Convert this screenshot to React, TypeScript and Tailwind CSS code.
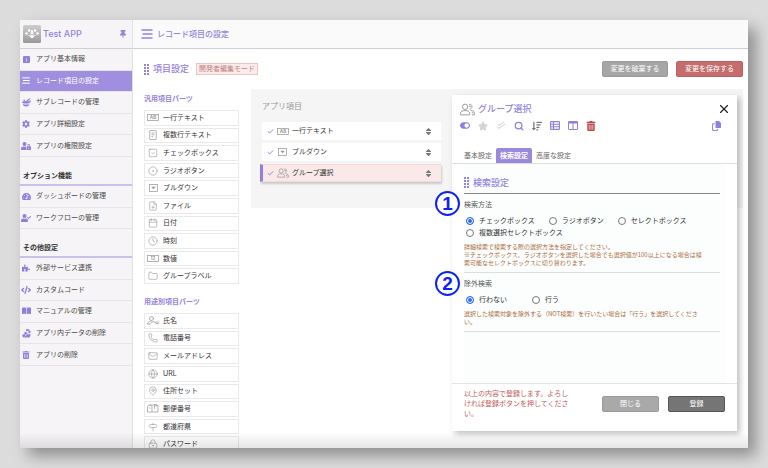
import type { ReactNode } from "react";
import {
  Calendar,
  Check,
  CircleDot,
  Clock,
  FilePlus,
  Folder,
  Globe,
  LockKeyhole,
  Mail,
  MapPin,
  Phone,
  Search,
  Signpost,
  SquareCheck,
  X,
} from "lucide-react";
import {
  FaCode,
  FaCog,
  FaPuzzlePiece,
  FaSort,
  FaSortAmountDown,
  FaStar,
  FaTachometerAlt,
  FaThumbtack,
  FaToggleOn,
  FaTrashAlt,
  FaUserCheck,
  FaUserLock,
} from "react-icons/fa";
import { BsInfoSquareFill } from "react-icons/bs";

type Entry = { icon: ReactNode; label: string; active?: boolean };

const partIcon = { size: 10, strokeWidth: 1.5 };

function BarsIcon({ className }: { className: string }) {
  return (
    <svg viewBox="0 0 24 20" className={className} stroke="currentColor" strokeWidth="3" strokeLinecap="round">
      <path d="M2 2H22M4 10H22M2 18H22" />
    </svg>
  );
}

function GripIcon() {
  return (
    <svg viewBox="0 0 6 11" width="6" height="11" className="mr-[3px]" fill="currentColor" shapeRendering="crispEdges">
      {[0, 3, 6, 9].map((y) => (
        <g key={y}>
          <rect x="0" y={y} width="2" height="2" />
          <rect x="3" y={y} width="2" height="2" />
        </g>
      ))}
    </svg>
  );
}

function DoubleCheckIcon() {
  return (
    <svg viewBox="0 0 20 18" width="10" height="9" fill="none" stroke="currentColor" strokeWidth="2">
      <path d="M2 5l4 4 10-7M2 11l4 4L18 6" />
    </svg>
  );
}

function BowlIcon() {
  return (
    <svg viewBox="0 0 20 20" width="9" height="9" fill="currentColor">
      <ellipse cx="9" cy="9.5" rx="9" ry="2.800" />
      <path d="M2 13.500c3 1.500 11 1.500 14 0 0 3-2 5.500-7 5.500s-7-2.500-7-5.500z" />
      <path d="M9 6l8-5.500 1.400 1.600-5 4.700z" />
      <circle cx="5" cy="5" r="1.800" />
      <circle cx="18" cy="7" r="1.800" />
    </svg>
  );
}

function BookIcon() {
  return (
    <svg viewBox="0 0 20 16" width="9" height="8" fill="currentColor">
      <path d="M0 1c3-1 6-1 9.3 0v14C6 14 3 14 0 15zM10.700 1C14 0 17 0 20 1v14c-3-1-6-1-9.300 0z" />
    </svg>
  );
}

function DataEraseIcon() {
  return (
    <svg viewBox="0 0 20 20" width="9" height="9" fill="currentColor">
      <path d="M9 1c4-2 8 0 8.500 4l2-1-1.500 6-5-3 2-1c-1-2.500-3-3-6-1z" />
      <path d="M6 6l5 1 1 4 4 1 2-2c2 4 0 9-3 9H5c-4 0-5-4-4-6l4-2z" />
      <path d="M6 11.500l4.500 4.500M10.500 11.500L6 16" stroke="#f6f4f6" strokeWidth="1.500" />
    </svg>
  );
}

function BoxedTextIcon({ text }: { text: string }) {
  return (
    <svg viewBox="0 0 24 14" width="12" height="7" fill="none" stroke="currentColor" strokeWidth="1.500">
      <rect x="1" y="1" width="22" height="12" />
      <text x="12" y="10.500" textAnchor="middle" fontSize="9" fontWeight="700" fill="currentColor" stroke="none">
        {text}
      </text>
    </svg>
  );
}

function DocumentIcon() {
  return (
    <svg viewBox="0 0 16 20" width="8" height="10" fill="none" stroke="currentColor" strokeWidth="1.500">
      <rect x="1.500" y="1" width="13" height="18" rx="1" />
      <path d="M5 6h6M5 9.500h6M5 13h3" />
    </svg>
  );
}

function PulldownIcon() {
  return (
    <svg viewBox="0 0 18 16" width="9" height="8" fill="none" stroke="currentColor" strokeWidth="1.500">
      <rect x="1" y="1" width="16" height="14" />
      <path d="M4.500 5.500h9l-4.500 5z" fill="currentColor" stroke="none" />
    </svg>
  );
}

function NameIcon() {
  return (
    <svg viewBox="0 0 24 18" width="12" height="9" fill="none" stroke="currentColor" strokeWidth="1.500" strokeLinecap="round">
      <circle cx="9" cy="5" r="4" />
      <path d="M1 16c1-5 5-6 8-6M1 16c4 1 8-1 10-4l2-2 2 3 2-1 1 3h5M19 12h4" />
    </svg>
  );
}

function PostIcon() {
  return (
    <svg viewBox="0 0 24 18" width="12" height="9" fill="none" stroke="currentColor" strokeWidth="1.500">
      <path d="M1 16V6c0-5 9-5 9 0v10zM10 16h12V3h-3M5 2h10M15 10V1h4v3h-4M4 8h3" />
    </svg>
  );
}

function GroupIcon({ className }: { className: string }) {
  return (
    <svg viewBox="0 0 28 24" className={className} fill="none" stroke="currentColor" strokeWidth="1.800">
      <circle cx="9.500" cy="7" r="5" />
      <path d="M1 22v-3c0-3 3-5 8.500-5s8.500 2 8.500 5v3zM17 2.500c6-2 8 8 1 9M20 14c5 0 7 2 7 5v3h-5" />
      <path d="M17 6h4M22 18h3" />
    </svg>
  );
}

function RowsIcon() {
  return (
    <svg viewBox="0 0 20 18" width="10" height="9" fill="none" stroke="currentColor" strokeWidth="2.200">
      <rect x="1.200" y="1.200" width="17.600" height="15.600" rx="1" />
      <path d="M1 6.500h18M1 11.500h18M7 1v16" />
    </svg>
  );
}

function ColumnsIcon() {
  return (
    <svg viewBox="0 0 20 18" width="10" height="9" fill="none" stroke="currentColor" strokeWidth="2">
      <rect x="1" y="1" width="18" height="16" rx="1" />
      <path d="M1 3h18" strokeWidth="4" />
      <path d="M10 1v16" />
    </svg>
  );
}

function CopyIcon() {
  return (
    <svg viewBox="0 0 18 20" width="9" height="10" fill="currentColor">
      <path d="M7 0h7l4 4v10H7z" />
      <path d="M5.500 5.500H1.200v13.300h10V16" fill="none" stroke="currentColor" strokeWidth="2" />
    </svg>
  );
}

const basics: Entry[] = [
  { icon: <BsInfoSquareFill size={7} />, label: "アプリ基本情報" },
  { icon: <BarsIcon className="h-[7px] w-2" />, label: "レコード項目の設定", active: true },
  { icon: <BowlIcon />, label: "サブレコードの管理" },
  { icon: <FaCog size={8} />, label: "アプリ詳細設定" },
  { icon: <FaUserLock size={10} />, label: "アプリの権限設定" },
];

const options: Entry[] = [
  { icon: <FaTachometerAlt size={9} />, label: "ダッシュボードの管理" },
  { icon: <FaUserCheck size={10} />, label: "ワークフローの管理" },
];

const others: Entry[] = [
  { icon: <FaPuzzlePiece size={8} />, label: "外部サービス連携" },
  { icon: <FaCode size={10} />, label: "カスタムコード" },
  { icon: <BookIcon />, label: "マニュアルの管理" },
  { icon: <DataEraseIcon />, label: "アプリ内データの削除" },
  { icon: <FaTrashAlt size={8} />, label: "アプリの削除" },
];

const generalParts: Entry[] = [
  { icon: <BoxedTextIcon text="AB" />, label: "一行テキスト" },
  { icon: <DocumentIcon />, label: "複数行テキスト" },
  { icon: <SquareCheck {...partIcon} />, label: "チェックボックス" },
  { icon: <CircleDot {...partIcon} />, label: "ラジオボタン" },
  { icon: <PulldownIcon />, label: "プルダウン" },
  { icon: <FilePlus {...partIcon} />, label: "ファイル" },
  { icon: <Calendar {...partIcon} />, label: "日付" },
  { icon: <Clock {...partIcon} />, label: "時刻" },
  { icon: <BoxedTextIcon text="12" />, label: "数値" },
  { icon: <Folder {...partIcon} />, label: "グループラベル" },
];

const purposeParts: Entry[] = [
  { icon: <NameIcon />, label: "氏名" },
  { icon: <Phone {...partIcon} />, label: "電話番号" },
  { icon: <Mail {...partIcon} />, label: "メールアドレス" },
  { icon: <Globe {...partIcon} />, label: "URL" },
  { icon: <MapPin {...partIcon} />, label: "住所セット" },
  { icon: <PostIcon />, label: "郵便番号" },
  { icon: <Signpost {...partIcon} />, label: "都道府県" },
  { icon: <LockKeyhole {...partIcon} />, label: "パスワード" },
];

const fields: Entry[] = [
  { icon: <BoxedTextIcon text="AB" />, label: "一行テキスト" },
  { icon: <PulldownIcon />, label: "プルダウン" },
  { icon: <GroupIcon className="h-[10px] w-3" />, label: "グループ選択", active: true },
];

function NavList({ items, height }: { items: Entry[]; height: string }) {
  return (
    <ul className={`flex flex-col ${height}`}>
      {items.map((item) => (
        <li key={item.label} className="flex flex-1 border-b border-[#e6e4e8]">
          <a
            href="#"
            className={`flex flex-1 items-center gap-1 ${item.active ? "bg-[#a08fdf] text-white" : "text-[#4a4a4a]"}`}
          >
            <span className={`flex w-3 justify-center ${item.active ? "text-white" : "text-[#927fdb]"}`}>
              {item.icon}
            </span>
            {item.label}
          </a>
        </li>
      ))}
    </ul>
  );
}

function NavHeading({ children }: { children: string }) {
  return (
    <h2 className="flex h-[29px] items-end border-b-2 border-[#c9c0ec] pb-[3px] pl-[3px] font-bold text-[#333]">
      {children}
    </h2>
  );
}

function PartList({ title, items, height }: { title: string; items: Entry[]; height: string }) {
  return (
    <section>
      <h2 className="mb-[6px] font-bold text-[#9583dc]">{title}</h2>
      <ul className={`flex flex-col gap-0.5 ${height}`}>
        {items.map((item) => (
          <li key={item.label} className="flex min-h-0 flex-1">
            <button type="button" className="flex flex-1 items-center gap-1 border border-[#e9e9e9] bg-white pl-[2px] text-[#333]">
              <span className="flex w-3 justify-center text-[#999]">{item.icon}</span>
              {item.label}
            </button>
          </li>
        ))}
      </ul>
    </section>
  );
}

function Radio({ name, label, checked }: { name: string; label: string; checked?: boolean }) {
  return (
    <label className="flex items-center gap-[5px] text-[#333]">
      <input
        type="radio"
        name={name}
        defaultChecked={checked}
        className="size-2 appearance-none rounded-full border border-[#777] bg-white checked:border-[#2f6df0] checked:bg-[#2f6df0] checked:shadow-[inset_0_0_0_1px_#fff]"
      />
      {label}
    </label>
  );
}

function Marker({ value, top }: { value: string; top: string }) {
  return (
    <span
      className={`absolute -left-[17px] flex size-[25px] items-center justify-center rounded-full border-2 border-[#0a22f5] bg-white font-['Liberation_Sans',sans-serif] text-[19px] font-bold text-[#0a22f5] ${top}`}
    >
      {value}
    </span>
  );
}

function HelpText({ children }: { children: ReactNode }) {
  return (
    <p className="mt-[5px] pr-[18px] font-['Noto_Sans_CJK_JP',sans-serif] text-[6px] leading-[8px] text-[#ad6a42]">
      {children}
    </p>
  );
}

function SettingsPanel() {
  return (
    <aside className="absolute top-[75px] right-[11px] bottom-[17px] flex w-[285px] flex-col bg-white shadow-[3px_3px_6px_rgba(0,0,0,0.25)]">
      <Marker value="1" top="top-[96px]" />
      <Marker value="2" top="top-[176px]" />
      <header className="flex h-7 items-center gap-[3px] pr-[6px] pl-2">
        <GroupIcon className="h-[13px] w-[15px] text-[#999]" />
        <h2 className="text-[9px] font-medium text-[#9583dc]">グループ選択</h2>
        <button type="button" aria-label="パネルを閉じる" className="ml-auto text-[#222]">
          <X size={14} strokeWidth={2} />
        </button>
      </header>
      <div className="flex h-[5px] items-center pr-4 pl-2 text-[#927fdb]">
        <div className="flex items-center gap-2">
          <button type="button" aria-label="有効" className="flex w-[10px] justify-center"><FaToggleOn size={11} /></button>
          <button type="button" aria-label="お気に入り" className="flex w-[10px] justify-center text-[#d3d3d3]"><FaStar size={10} /></button>
          <button type="button" aria-label="必須" className="flex w-[10px] justify-center text-[#cfcfcf]"><DoubleCheckIcon /></button>
          <button type="button" aria-label="検索" className="flex w-[10px] justify-center"><Search size={10} strokeWidth={3} /></button>
          <button type="button" aria-label="並び替え" className="flex w-[10px] justify-center text-[#777]"><FaSortAmountDown size={10} /></button>
          <button type="button" aria-label="一覧" className="flex w-[10px] justify-center"><RowsIcon /></button>
          <button type="button" aria-label="列" className="flex w-[10px] justify-center"><ColumnsIcon /></button>
          <button type="button" aria-label="削除" className="flex w-[10px] justify-center text-[#b94a4a]"><FaTrashAlt size={10} /></button>
        </div>
        <button type="button" aria-label="複製" className="ml-auto"><CopyIcon /></button>
      </div>
      <div role="tablist" className="mt-5 flex h-4 border-b border-[#ddd] pl-2">
        <button type="button" role="tab" aria-selected="false" className="px-1 text-[#666]">基本設定</button>
        <button type="button" role="tab" aria-selected="true" className="rounded-t-xs bg-[#9a88dd] px-1 font-bold text-white">検索設定</button>
        <button type="button" role="tab" aria-selected="false" className="px-1 text-[#666]">高度な設定</button>
      </div>
      <div className="mx-3 flex-1 overflow-hidden bg-[#fbfefd] pr-[5px] text-[#555]">
        <h3 className="flex h-[30px] items-center border-b border-[#888] pt-2 text-[9px] font-medium text-[#9583dc]">
          <GripIcon />
          検索設定
        </h3>
        <fieldset className="border-b border-[#ddd] pt-[6px] pb-[5px]">
          <legend className="contents">検索方法</legend>
          <div className="flex flex-wrap gap-x-[14px] gap-y-[2px] pt-[6px] pl-[2px]">
            <Radio name="method" label="チェックボックス" checked />
            <Radio name="method" label="ラジオボタン" />
            <Radio name="method" label="セレクトボックス" />
            <Radio name="method" label="複数選択セレクトボックス" />
          </div>
          <HelpText>
            詳細検索で検索する際の選択方法を指定してください。
            <br />
            ※チェックボックス、ラジオボタンを選択した場合でも選択値が100以上になる場合は検索可能なセレクトボックスに切り替わります。
          </HelpText>
        </fieldset>
        <fieldset className="border-b border-[#ddd] pt-[6px] pb-[5px]">
          <legend className="contents">除外検索</legend>
          <div className="flex gap-[25px] pt-[6px] pl-[2px]">
            <Radio name="exclude" label="行わない" checked />
            <Radio name="exclude" label="行う" />
          </div>
          <HelpText>
            選択した検索対象を除外する（NOT検索）を行いたい場合は「行う」を選択してください。
          </HelpText>
        </fieldset>
      </div>
      <footer className="flex h-12 items-start border-t border-[#e4e4e4] px-3">
        <p className="mt-[5px] w-[107px] text-[#c25c5c]">
          以上の内容で登録します。よろしければ登録ボタンを押してください。
        </p>
        <div className="mt-3 ml-auto flex gap-[9px]">
          <button type="button" className="h-4 w-[57px] rounded-xs border border-[#999] bg-[#a9a9a9] text-white">閉じる</button>
          <button type="button" className="h-4 w-[57px] rounded-xs border border-[#555] bg-[#757575] text-white">登録</button>
        </div>
      </footer>
    </aside>
  );
}

export default function App() {
  return (
    <div className="h-screen bg-[#dcdcdc] p-5 font-['Inter','Noto_Sans_CJK_JP',sans-serif] text-[7px] leading-[10px]">
      <div className="relative flex h-full bg-white shadow-[8px_8px_14px_rgba(0,0,0,0.35)]">
        <nav className="w-[113px] shrink-0 overflow-hidden border-r border-[#e2e0e4] bg-[#f6f4f6]">
          <div className="flex h-[29px] items-center gap-[2px] border-b border-[#cfcfcf] pr-[5px] pl-[3px] text-[#9583dc]">
            <svg viewBox="0 0 36 36" className="size-[18px]">
              <defs>
                <linearGradient id="badge" x1="0" y1="0" x2="0" y2="1">
                  <stop offset="0" stopColor="#cfcfcf" />
                  <stop offset="1" stopColor="#999" />
                </linearGradient>
              </defs>
              <rect width="36" height="36" rx="3" fill="url(#badge)" />
              <g fill="#fff">
                <circle cx="7" cy="17" r="2.500" />
                <circle cx="12" cy="11" r="2.500" />
                <circle cx="24" cy="11" r="2.500" />
                <circle cx="29" cy="17" r="2.500" />
                <ellipse cx="18" cy="14" rx="2.500" ry="4" />
                <path d="M8 19c3 3 6 2 8 7h4c2-5 5-4 8-7-4 2-6 1-8 3l3-8-4 6h-2l-4-6 3 8c-2-2-4-1-8-3z" />
              </g>
            </svg>
            <span className="text-[9px] font-medium">Test APP</span>
            <FaThumbtack size={8} className="ml-auto" />
          </div>
          <NavList items={basics} height="h-[108px]" />
          <NavHeading>オプション機能</NavHeading>
          <NavList items={options} height="h-[43px]" />
          <NavHeading>その他設定</NavHeading>
          <NavList items={others} height="h-[108px]" />
        </nav>

        <main className="flex min-w-0 flex-1 flex-col overflow-hidden">
          <header className="flex h-[29px] shrink-0 items-center gap-1 border-b border-[#cfcfcf] bg-[#fafafa] pl-2 text-[#9583dc]">
            <BarsIcon className="h-[10px] w-3" />
            <h1 className="text-[8px] font-medium">レコード項目の設定</h1>
          </header>
          <div className="flex items-center pt-3 pr-[5px] pl-[11px] text-[#9583dc]">
            <GripIcon />
            <h2 className="text-[9px] font-medium">項目設定</h2>
            <span className="ml-[7px] border border-[#ebc4c4] bg-[#faecec] px-[2px] text-[#c77f7f]">開発者編集モード</span>
            <button type="button" className="ml-auto h-4 w-[66px] rounded-xs border border-[#999] bg-[#a6a6a6] text-white">変更を破棄する</button>
            <button type="button" className="ml-2 h-4 w-[67px] rounded-xs border border-[#bd5f5f] bg-[#c56c6c] text-white">変更を保存する</button>
          </div>
          <div className="flex min-h-0 flex-1 items-start gap-3 pt-3 pr-[5px] pl-[11px]">
            <div className="flex w-[95px] shrink-0 flex-col gap-[13px] pt-[5px]">
              <PartList title="汎用項目パーツ" items={generalParts} height="h-[174px]" />
              <PartList title="用途別項目パーツ" items={purposeParts} height="h-[139px]" />
            </div>
            <section className="flex-1 bg-[#f5f5f5] pt-3 pb-[26px] pl-[11px]">
              <h2 className="text-[8px] text-[#999]">アプリ項目</h2>
              <ul className="mt-[11px] flex w-[179px] flex-col gap-[3px]">
                {fields.map((field) => (
                  <li
                    key={field.label}
                    className={`flex h-[18px] items-center pr-2 text-[#333] ${
                      field.active
                        ? "-ml-[2px] border-y border-l-3 border-y-[#f3d9d9] border-l-[#927fdb] bg-[#fbe9e9] pl-1 shadow-[1px_2px_2px_rgba(0,0,0,0.18)]"
                        : "bg-white pl-[5px]"
                    }`}
                  >
                    <Check size={7} strokeWidth={3} className="text-[#8570d8]" />
                    <span className="mr-[3px] ml-[2px] flex w-[13px] justify-center text-[#999]">{field.icon}</span>
                    {field.label}
                    <button type="button" aria-label={`${field.label}を並べ替え`} className="ml-auto text-[#777]">
                      <FaSort size={9} />
                    </button>
                  </li>
                ))}
              </ul>
            </section>
          </div>
        </main>

        <div className="pointer-events-none absolute inset-x-0 bottom-0 h-4 bg-linear-to-t from-black/10 to-transparent" />
        <SettingsPanel />
      </div>
    </div>
  );
}
